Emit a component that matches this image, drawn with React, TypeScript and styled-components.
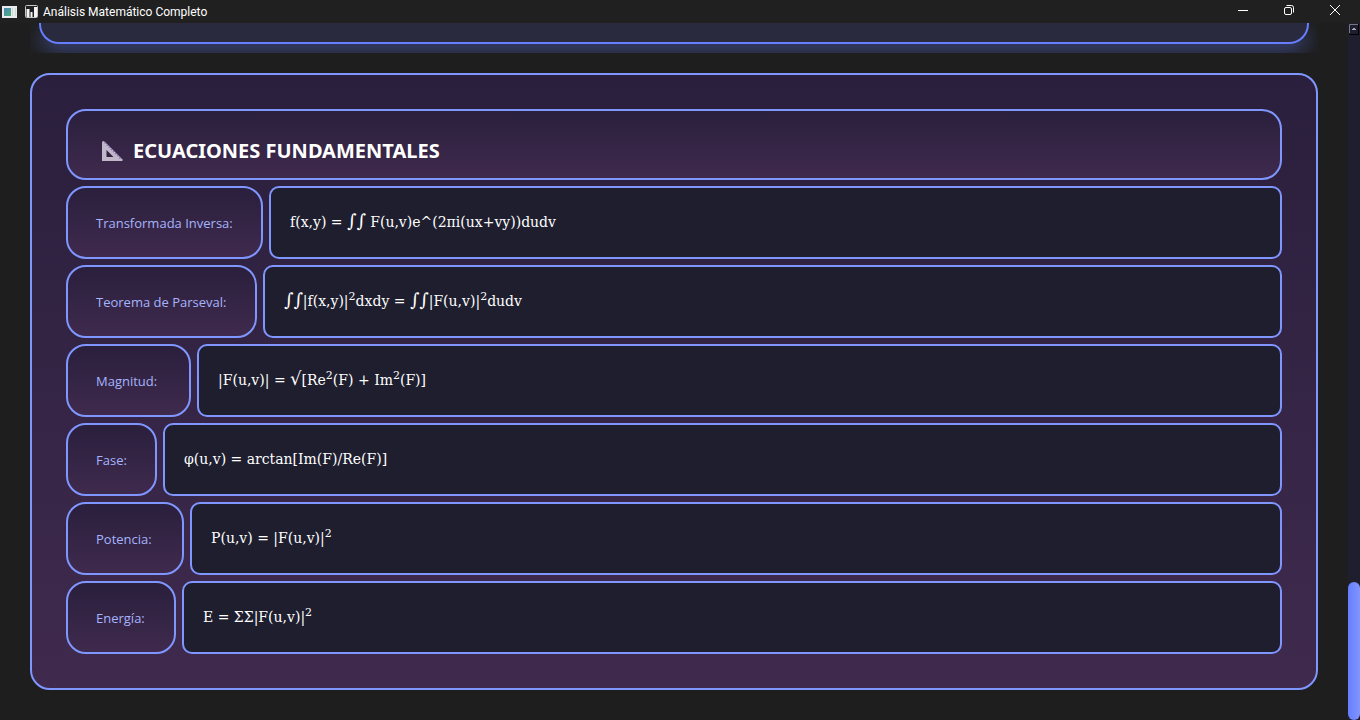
import React from 'react';
import styled, { createGlobalStyle } from 'styled-components';

const Global = createGlobalStyle`
  *, *::before, *::after { box-sizing: border-box; }
  body { margin: 0; background: #1e1e1e; }
`;

const UI_FONT = `"Open Sans", "Noto Sans", sans-serif`;

const Window = styled.div`
  height: 100vh;
  display: flex;
  flex-direction: column;
  overflow: hidden;
  color: #fff;
  font-family: ${UI_FONT};
`;

const TitleBar = styled.header`
  flex: none;
  height: 23px;
  display: flex;
  align-items: center;
  background: #202020;
`;

const TitleIcons = styled.span`
  display: flex;
  align-items: center;
  gap: 8px;
  padding: 0 5px 0 2px;
`;

const WindowTitle = styled.h1`
  margin: 0;
  flex: 1;
  font-family: Roboto, sans-serif;
  font-size: 12px;
  line-height: 16px;
  font-weight: 400;
`;

const WindowButton = styled.button`
  width: 46px;
  height: 20px;
  padding: 0;
  display: flex;
  align-items: center;
  justify-content: center;
  border: 0;
  background: none;
  color: #fff;
`;

const WindowButtons = styled.div`
  align-self: flex-start;
  display: flex;
  padding-right: 2px;
`;

const Body = styled.div`
  flex: 1;
  min-height: 0;
  display: flex;
`;

const Content = styled.main`
  flex: 1;
  min-width: 0;
  padding: 0 30px;
`;

const PreviousSection = styled.div`
  height: 30px;
  padding: 0 9px 9px;
  overflow: hidden;
`;

const PreviousCard = styled.div`
  height: 100%;
  border: 2px solid #667eff;
  border-top: 0;
  border-radius: 0 0 20px 20px;
  background: #2a2a3e;
  box-shadow: 0 8px 20px rgba(102, 126, 255, 0.4);
`;

const Section = styled.section`
  margin-top: 20px;
  padding: 34px;
  display: flex;
  flex-direction: column;
  gap: 6px;
  border: 2px solid #8096ff;
  border-radius: 20px;
  background: linear-gradient(#2a1f3d, #3f2a4d);
`;

const SectionHeader = styled.div`
  height: 71px;
  padding: 12px 34px 0;
  display: flex;
  align-items: center;
  gap: 10px;
  border: 2px solid #8096ff;
  border-radius: 20px;
  background: linear-gradient(#2a1f3d, #3f2a4d);
`;

const SectionTitle = styled.h2`
  margin: 0;
  font-family: "Noto Sans", sans-serif;
  font-size: 20px;
  line-height: 28px;
  font-weight: 700;
`;

const Row = styled.div`
  display: flex;
  gap: 6px;
  height: 73px;
`;

const Term = styled.div<{ $width: number }>`
  flex: none;
  width: ${({ $width }) => $width}px;
  padding-left: 28px;
  display: flex;
  align-items: center;
  white-space: nowrap;
  border: 2px solid #8096ff;
  border-radius: 20px;
  background: linear-gradient(#2a1f3d, #3f2a4d);
  color: #a5b4fc;
  font-size: 13px;
  line-height: 20px;
  font-weight: 500;
`;

const Formula = styled.div`
  flex: 1;
  padding: 25px 19px 0;
  border: 2px solid #8096ff;
  border-radius: 10px;
  background: #1e1e2e;
  font-family: "DejaVu Serif", serif;
  font-size: 14px;
  line-height: 18px;
`;

const Operator = styled.span`
  font-size: 18px;
  line-height: 0;
`;

const Power = styled.sup`
  font-size: 11px;
  line-height: 0;
`;

const ScrollTrack = styled.div`
  flex: none;
  width: 12px;
  display: flex;
  flex-direction: column;
  justify-content: space-between;
  background: #1e1e2e;
`;

const ScrollUp = styled.button`
  width: 12px;
  height: 12px;
  padding: 0;
  display: flex;
  border: 0;
  background: none;
`;

const ScrollThumb = styled.div`
  height: 138px;
  border-radius: 6px;
  background: linear-gradient(90deg, #667eff, #8096ff);
`;

const Int = () => <Operator>∫∫</Operator>;
const Sq = () => <Power>2</Power>;

const equations = [
  { term: 'Transformada Inversa:', width: 197, formula: <>f(x,y) = <Int /> F(u,v)e^(2πi(ux+vy))dudv</> },
  { term: 'Teorema de Parseval:', width: 191, formula: <><Int />|f(x,y)|<Sq />dxdy = <Int />|F(u,v)|<Sq />dudv</> },
  { term: 'Magnitud:', width: 125, formula: <>|F(u,v)| = <Operator>√</Operator>[Re<Sq />(F) + Im<Sq />(F)]</> },
  { term: 'Fase:', width: 91, formula: <>φ(u,v) = arctan[Im(F)/Re(F)]</> },
  { term: 'Potencia:', width: 118, formula: <>P(u,v) = |F(u,v)|<Sq /></> },
  { term: 'Energía:', width: 110, formula: <>E = ΣΣ|F(u,v)|<Sq /></> },
];

const AppIcon = () => (
  <svg width="15" height="12" viewBox="0 0 15 12" aria-hidden="true">
    <defs>
      <linearGradient id="pane" x1="0" y1="0" x2="1" y2="1">
        <stop offset="0" stopColor="#4a86b8" />
        <stop offset="1" stopColor="#4fae7c" />
      </linearGradient>
    </defs>
    <rect width="15" height="12" fill="#e8ecef" />
    <rect x="2" y="2" width="7" height="8" fill="url(#pane)" />
    <path d="M10.500 2v8M13.500 2v8" stroke="#cdd8d4" />
  </svg>
);

const ChartIcon = () => (
  <svg width="13" height="13" viewBox="0 0 13 13" fill="none" aria-hidden="true">
    <rect x=".5" y=".5" width="12" height="12" rx="1" fill="#202020" stroke="#c8c8c8" />
    <path d="M3 4v8M10.500 2v10" stroke="#f4f4f4" strokeWidth="3" />
    <path d="M6.500 7v5" stroke="#f4f4f4" strokeWidth="2" />
  </svg>
);

const SetSquare = () => (
  <svg width="21" height="20" viewBox="0 0 21 20" aria-hidden="true">
    <path d="M0 1.500Q0 0 1.300 0L3 1 20.500 18.500V20H0Z" fill="#c0b8c8" />
    <path d="M4.500 9v7H11.500Z" fill="#33213f" />
    <path d="M2.500 1.500L19.500 18.500" stroke="#9272c8" strokeWidth="1.500" strokeDasharray="1.500 1.500" />
  </svg>
);

export default function App() {
  return (
    <Window>
      <Global />
      <TitleBar>
        <TitleIcons>
          <AppIcon />
          <ChartIcon />
        </TitleIcons>
        <WindowTitle>Análisis Matemático Completo</WindowTitle>
        <WindowButtons>
          <WindowButton aria-label="Minimizar">
            <svg width="10" height="10" stroke="currentColor"><path d="M0 5.500h10" /></svg>
          </WindowButton>
          <WindowButton aria-label="Restaurar">
            <svg width="10" height="10" fill="none" stroke="currentColor">
              <rect x=".5" y="2.500" width="7" height="7" rx="1.500" />
              <path d="M2.500 .5H7.500Q9.500 .5 9.500 2.500V7.500" />
            </svg>
          </WindowButton>
          <WindowButton aria-label="Cerrar">
            <svg width="10" height="10" stroke="currentColor"><path d="M0 0l10 10M10 0L0 10" /></svg>
          </WindowButton>
        </WindowButtons>
      </TitleBar>
      <Body>
        <Content>
          <PreviousSection><PreviousCard /></PreviousSection>
          <Section>
            <SectionHeader>
              <SetSquare />
              <SectionTitle>ECUACIONES FUNDAMENTALES</SectionTitle>
            </SectionHeader>
            {equations.map(({ term, width, formula }) => (
              <Row key={term}>
                <Term $width={width}>{term}</Term>
                <Formula>{formula}</Formula>
              </Row>
            ))}
          </Section>
        </Content>
        <ScrollTrack>
          <ScrollUp aria-label="Subir">
            <svg width="12" height="12" fill="none">
              <path d="M1.500 10V1.500H10" stroke="#77778a" />
              <path d="M10.500 1v10.500H1" stroke="#000" />
              <path d="M4 6.500h4M5 5.500h2" stroke="#a9a9b5" />
            </svg>
          </ScrollUp>
          <ScrollThumb />
        </ScrollTrack>
      </Body>
    </Window>
  );
}
